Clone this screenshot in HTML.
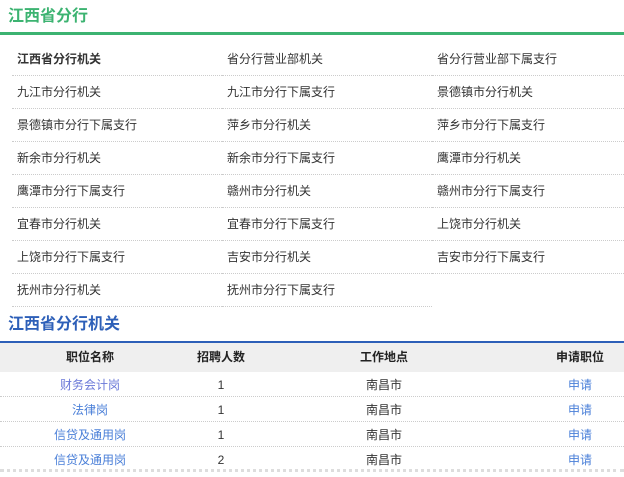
<!DOCTYPE html>
<html><head><meta charset="utf-8"><style>
*{margin:0;padding:0;box-sizing:border-box}
body{width:624px;height:477px;overflow:hidden;background:#fff;font-family:"Liberation Sans","Noto Sans CJK SC",sans-serif;color:#333;position:relative}
.t1{position:absolute;left:8px;top:7px;font-size:16px;font-weight:bold;color:#3cb371;line-height:20px}
.g{position:absolute;left:0;top:32px;width:624px;height:3px;background:#3cb371}
.it{position:absolute;font-size:12px;line-height:16px;color:#333;border-bottom:1px dotted #ccc;height:33px;padding-top:8px;padding-left:5px}
.t2{position:absolute;left:8px;top:315px;font-size:16px;font-weight:bold;color:#2d5fb8;line-height:20px}
.b{position:absolute;left:0;top:341px;width:624px;height:2px;background:#2d5fb8}
.hd{position:absolute;left:0;top:343px;width:624px;height:29px;background:#efefef}
.c{position:absolute;font-size:12px;width:160px;text-align:center;line-height:16px}
.row{position:absolute;left:0;width:624px;border-bottom:1px dotted #ccc}
a{color:#4a7fd8;text-decoration:none}
</style></head><body>
<div class="t1">江西省分行</div><div class="g"></div>
<div id="list"></div>
<div class="t2">江西省分行机关</div><div class="b"></div>
<div class="hd"></div>
<div class="c" style="left:10px;top:349px;font-weight:bold;color:#222">职位名称</div>
<div class="c" style="left:141px;top:349px;font-weight:bold;color:#222">招聘人数</div>
<div class="c" style="left:304px;top:349px;font-weight:bold;color:#222">工作地点</div>
<div class="c" style="left:500px;top:349px;font-weight:bold;color:#222">申请职位</div>
<div class="row" style="top:372px;height:25px"></div>
<div class="row" style="top:397px;height:25px"></div>
<div class="row" style="top:422px;height:25px"></div>
<div class="row" style="top:447px;height:25px;border-bottom:3px dotted #ddd"></div>
<div class="c" style="left:10px;top:377px"><a style="color:#6a78d8">财务会计岗</a></div>
<div class="c" style="left:141px;top:377px">1</div>
<div class="c" style="left:304px;top:377px">南昌市</div>
<div class="c" style="left:500px;top:377px"><a>申请</a></div>
<div class="c" style="left:10px;top:402px"><a>法律岗</a></div>
<div class="c" style="left:141px;top:402px">1</div>
<div class="c" style="left:304px;top:402px">南昌市</div>
<div class="c" style="left:500px;top:402px"><a>申请</a></div>
<div class="c" style="left:10px;top:427px"><a>信贷及通用岗</a></div>
<div class="c" style="left:141px;top:427px">1</div>
<div class="c" style="left:304px;top:427px">南昌市</div>
<div class="c" style="left:500px;top:427px"><a>申请</a></div>
<div class="c" style="left:10px;top:452px"><a>信贷及通用岗</a></div>
<div class="c" style="left:141px;top:452px">2</div>
<div class="c" style="left:304px;top:452px">南昌市</div>
<div class="c" style="left:500px;top:452px"><a>申请</a></div>
<script>
var items=["江西省分行机关","省分行营业部机关","省分行营业部下属支行","九江市分行机关","九江市分行下属支行","景德镇市分行机关","景德镇市分行下属支行","萍乡市分行机关","萍乡市分行下属支行","新余市分行机关","新余市分行下属支行","鹰潭市分行机关","鹰潭市分行下属支行","赣州市分行机关","赣州市分行下属支行","宜春市分行机关","宜春市分行下属支行","上饶市分行机关","上饶市分行下属支行","吉安市分行机关","吉安市分行下属支行","抚州市分行机关","抚州市分行下属支行"];
var xs=[12,222,432],ws=[210,210,192],h="";
items.forEach(function(t,i){var c=i%3,r=Math.floor(i/3);h+='<div class="it" style="left:'+xs[c]+'px;top:'+(43+r*33)+'px;width:'+ws[c]+'px;'+(i==0?'font-weight:bold;':'')+'">'+t+'</div>';});
document.getElementById("list").innerHTML=h;
</script>
</body></html>
